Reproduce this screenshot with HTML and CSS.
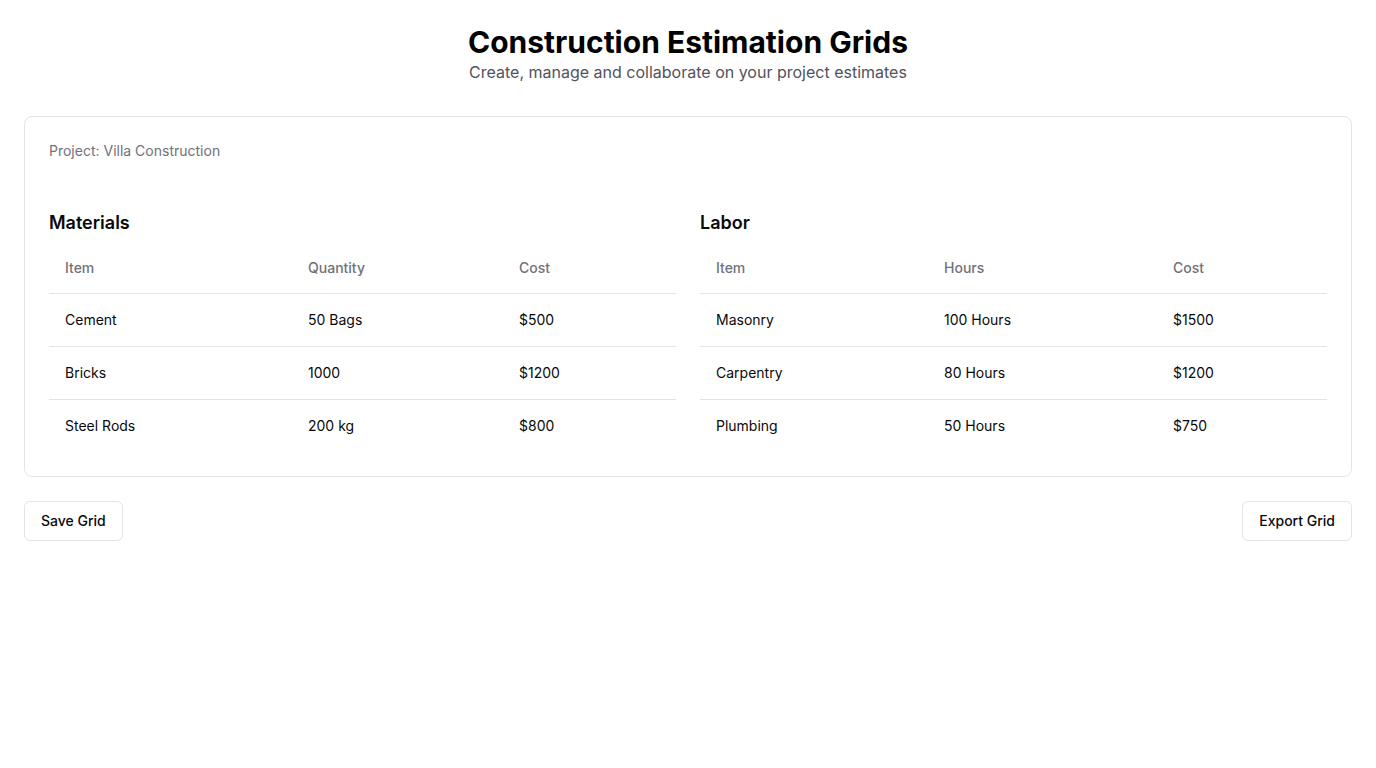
FILE: index.html
```html
<!DOCTYPE html>
<html lang="en">
<head>
<meta charset="utf-8">
<title>Construction Estimation Grids</title>
<link rel="stylesheet" href="styles.css">
</head>
<body>
<div class="page">
  <header class="header">
    <h1 class="title">Construction Estimation Grids</h1>
    <p class="subtitle">Create, manage and collaborate on your project estimates</p>
  </header>

  <section class="card">
    <p class="project">Project: Villa Construction</p>
    <div class="grids">
      <div class="grid">
        <h2 class="grid-title">Materials</h2>
        <table class="table">
          <colgroup><col class="c-m1"><col class="c-m2"><col></colgroup>
          <thead>
            <tr><th>Item</th><th>Quantity</th><th>Cost</th></tr>
          </thead>
          <tbody>
            <tr><td>Cement</td><td>50 Bags</td><td>$500</td></tr>
            <tr><td>Bricks</td><td>1000</td><td>$1200</td></tr>
            <tr><td>Steel Rods</td><td>200 kg</td><td>$800</td></tr>
          </tbody>
        </table>
      </div>
      <div class="grid">
        <h2 class="grid-title">Labor</h2>
        <table class="table">
          <colgroup><col class="c-l1"><col class="c-l2"><col></colgroup>
          <thead>
            <tr><th>Item</th><th>Hours</th><th>Cost</th></tr>
          </thead>
          <tbody>
            <tr><td>Masonry</td><td>100 Hours</td><td>$1500</td></tr>
            <tr><td>Carpentry</td><td>80 Hours</td><td>$1200</td></tr>
            <tr><td>Plumbing</td><td>50 Hours</td><td>$750</td></tr>
          </tbody>
        </table>
      </div>
    </div>
  </section>

  <div class="actions">
    <button class="btn">Save Grid</button>
    <button class="btn">Export Grid</button>
  </div>
</div>
</body>
</html>
```

FILE: styles.css
```css
* { box-sizing: border-box; }
html, body { margin: 0; padding: 0; background: #fff; }
body {
  font-family: Inter, "Noto Sans", sans-serif;
  color: #09090b;
}
.page { padding: 24px; }
.header { text-align: center; }
.title {
  margin: 0;
  font-size: 30px;
  line-height: 36px;
  font-weight: 700;
  color: #000;
}
.subtitle {
  margin: 0;
  font-size: 16px;
  line-height: 24px;
  color: #52525b;
}
.card {
  margin-top: 32px;
  border: 1px solid #e4e4e7;
  border-radius: 8px;
  padding: 24px;
}
.project {
  margin: 0 0 48px;
  font-size: 14px;
  line-height: 20px;
  color: #71717a;
}
.grids {
  display: grid;
  grid-template-columns: 1fr 1fr;
  gap: 24px;
}
.grid-title {
  margin: 0 0 4px;
  font-size: 18px;
  line-height: 28px;
  font-weight: 600;
  color: #09090b;
}
.table {
  width: 100%;
  border-collapse: collapse;
  font-size: 14px;
  line-height: 20px;
}
.c-m1 { width: 243px; }
.c-m2 { width: 211px; }
.c-l1 { width: 228px; }
.c-l2 { width: 229px; }
.table th {
  text-align: left;
  font-weight: 500;
  color: #71717a;
  padding: 17px 16px 15px;
  border-bottom: 1px solid #e4e4e7;
}
.table td {
  padding: 16px;
  color: #09090b;
  border-bottom: 1px solid #e4e4e7;
}
.table tbody tr:last-child td { border-bottom: none; }
.actions {
  margin-top: 24px;
  display: flex;
  justify-content: space-between;
}
.btn {
  font-family: inherit;
  font-size: 14px;
  line-height: 20px;
  font-weight: 500;
  color: #09090b;
  background: #fff;
  border: 1px solid #e4e4e7;
  border-radius: 6px;
  padding: 9px 16px;
  cursor: pointer;
}
```
